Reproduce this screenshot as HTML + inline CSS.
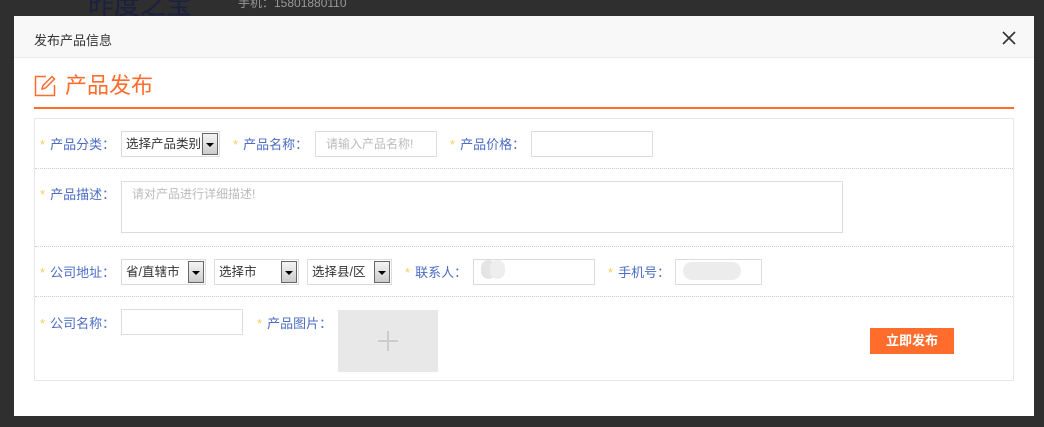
<!DOCTYPE html>
<html><head><meta charset="utf-8"><style>
*{margin:0;padding:0;box-sizing:border-box}
body{width:1044px;height:427px;background:#2f2f2f;position:relative;overflow:hidden;font-family:"Liberation Sans","Noto Sans CJK SC",sans-serif;font-size:13px}
.a{position:absolute}
.dlg{left:14px;top:16px;width:1020px;height:400px;background:#fff}
.hd{left:14px;top:16px;width:1020px;height:42px;background:#f8f8f8;border-bottom:1px solid #ebebeb}
.lbl{position:absolute;color:#4a6cc4;font-size:13px;line-height:16px;white-space:nowrap}
.lbl b{color:#f8cf5a;font-weight:normal;margin-right:5px}
.inp{position:absolute;border:1px solid #dcdcdc;background:#fff;height:26px;color:#bbb;font-size:12px;line-height:24px;padding-left:10px;white-space:nowrap}
.sel{position:absolute;border:1px solid #dcdcdc;background:#fff;height:26px;color:#333;font-size:12.5px;line-height:24px;padding-left:4px;white-space:nowrap}
.sel i{position:absolute;right:1px;top:1px;width:16px;height:22px;border:1px solid #666;background:linear-gradient(#f4f4f4,#ccc)}
.sel i:after{content:"";position:absolute;left:3px;top:9px;border-left:4px solid transparent;border-right:4px solid transparent;border-top:4px solid #000}
.dot{position:absolute;left:35px;width:978px;border-top:1px dotted #ccc}
</style></head><body>
<div class="a" style="left:88px;top:0;width:124px;height:16px;color:#1a2040;font-size:26px;line-height:10px;overflow:hidden">昨度之宝</div>
<div class="a" style="left:238px;top:-6px;color:#999;font-size:12px">手机：15801880110</div>
<div class="a dlg"></div>
<div class="a hd"></div>
<div class="a" style="left:34px;top:30px;font-size:13px;color:#333">发布产品信息</div>
<svg class="a" style="left:1002px;top:31px" width="14" height="14" viewBox="0 0 14 14"><path d="M1 1L13 13M13 1L1 13" stroke="#333" stroke-width="1.6"/></svg>
<svg class="a" style="left:34px;top:75px" width="22" height="22" viewBox="0 0 22 22" fill="none" stroke="#ff6c2c" stroke-width="1.5"><path d="M12 1.5H1.5V20.5H20.5V10"/><path d="M8 14L9 10.5L18 1.5L20.5 4L11.5 13Z"/></svg>
<div class="a" style="left:65px;top:72px;font-size:22px;color:#ff6c2c;line-height:28px">产品发布</div>
<div class="a" style="left:34px;top:107px;width:980px;height:2px;background:#ff6c2c"></div>
<div class="a" style="left:34px;top:118px;width:980px;height:263px;border:1px solid #e6e6e6"></div>
<div class="dot" style="top:168px"></div>
<div class="dot" style="top:246px"></div>
<div class="dot" style="top:296px"></div>

<div class="lbl" style="left:40px;top:137px"><b>*</b>产品分类：</div>
<div class="sel" style="left:121px;top:131px;width:99px">选择产品类别<i></i></div>
<div class="lbl" style="left:233px;top:137px"><b>*</b>产品名称：</div>
<div class="inp" style="left:315px;top:131px;width:122px">请输入产品名称!</div>
<div class="lbl" style="left:450px;top:137px"><b>*</b>产品价格：</div>
<div class="inp" style="left:531px;top:131px;width:122px"></div>

<div class="lbl" style="left:40px;top:187px"><b>*</b>产品描述：</div>
<div class="inp" style="left:121px;top:181px;width:722px;height:52px;line-height:24px">请对产品进行详细描述!</div>

<div class="lbl" style="left:40px;top:265px"><b>*</b>公司地址：</div>
<div class="sel" style="left:121px;top:259px;width:85px">省/直辖市<i></i></div>
<div class="sel" style="left:214px;top:259px;width:85px">选择市<i></i></div>
<div class="sel" style="left:307px;top:259px;width:85px">选择县/区<i></i></div>
<div class="lbl" style="left:405px;top:265px"><b>*</b>联系人：</div>
<div class="inp" style="left:473px;top:259px;width:122px"></div>
<div class="a" style="left:481px;top:260px;width:15px;height:19px;border-radius:8px;background:#e4e4e4"></div>
<div class="a" style="left:490px;top:260px;width:15px;height:19px;border-radius:8px;background:#eee"></div>
<div class="lbl" style="left:608px;top:265px"><b>*</b>手机号：</div>
<div class="inp" style="left:675px;top:259px;width:87px"></div>
<div class="a" style="left:683px;top:262px;width:58px;height:18px;border-radius:9px;background:#ececec"></div>

<div class="lbl" style="left:40px;top:316px"><b>*</b>公司名称：</div>
<div class="inp" style="left:121px;top:309px;width:122px"></div>
<div class="lbl" style="left:257px;top:316px"><b>*</b>产品图片：</div>
<div class="a" style="left:338px;top:310px;width:100px;height:62px;background:#e8e8e8"></div>
<div class="a" style="left:378px;top:340px;width:20px;height:2px;background:#ccc"></div>
<div class="a" style="left:387px;top:331px;width:2px;height:20px;background:#ccc"></div>
<div class="a" style="left:870px;top:328px;width:84px;height:26px;background:#ff6c2c;color:#fff;font-weight:bold;font-size:13px;line-height:26px;text-align:center">立即发布</div>
</body></html>
